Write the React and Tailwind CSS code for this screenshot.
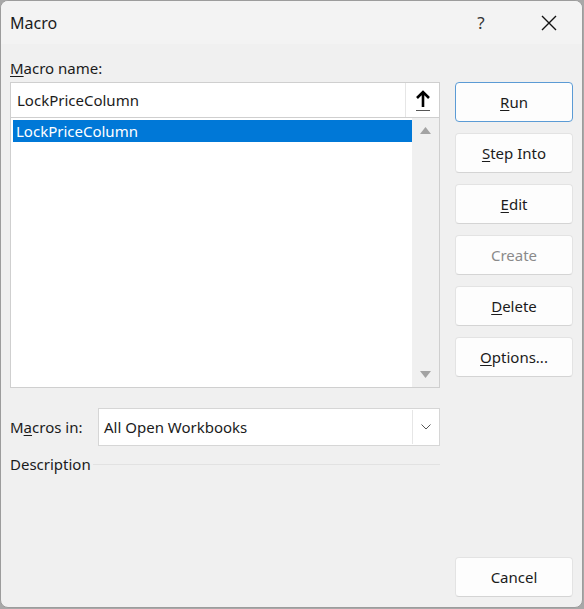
import React from 'react';

const font = { fontFamily: '"Noto Sans", "Open Sans", sans-serif' };

const Btn = ({ children, primary, disabled }) => (
    <button
        type="button"
        className={`h-[40px] w-[118px] rounded-[4px] bg-[#fdfdfd] text-[15px] ${primary ? 'border border-[#5b9bd5]' : 'border border-[#e3e3e3] border-b-[#d4d4d4]'} ${disabled ? 'text-[#8a8a8a]' : 'text-[#1b1b1b]'}`}
    >
        {children}
    </button>
);

const UpArrowIcon = () => (
    <svg width="18" height="24" viewBox="0 0 18 24" fill="none">
        <path d="M9 19V4M3 10l6-6 6 6" stroke="#000" strokeWidth="2.6" />
        <path d="M2 22.5h14" stroke="#555" strokeWidth="1" />
    </svg>
);

const App = () => {
    return (
        <div className="w-[584px] h-[609px] bg-[#a8a8a8]" style={font}>
            <div className="w-[583px] h-[608px] rounded-[8px] border border-[#9c9c9c] bg-[#f0f0f0] overflow-hidden flex flex-col text-[#1b1b1b]">
                {/* Title bar */}
                <div className="h-[43px] shrink-0 bg-[#f3f3f3] flex items-center pl-[9px]">
                    <span className="text-[16px] flex-1">Macro</span>
                    <span className="text-[17px] text-[#333] w-[70px] text-center ml-[4px]">?</span>
                    <div className="w-[66px] h-[43px] flex items-center justify-center">
                        <svg width="16" height="16" viewBox="0 0 16 16">
                            <path d="M1 1l14 14M15 1L1 15" stroke="#111" strokeWidth="1.4" />
                        </svg>
                    </div>
                </div>

                {/* Body */}
                <div className="flex-1 flex pl-[9px] gap-[15px]">
                    {/* Left column */}
                    <div className="w-[430px] flex flex-col">
                        <div className="h-[20px] mt-[14px] mb-[4px] text-[15px] leading-[20px]">
                            <u className="underline-offset-2">M</u>acro name:
                        </div>
                        <div className="border border-[#cfcfcf] bg-white">
                            <div className="h-[35px] flex border-b border-[#cfcfcf]">
                                <div className="flex-1 pl-[6px] flex items-center text-[15px]">LockPriceColumn</div>
                                <div className="w-[34px] flex items-center justify-center border-l border-[#e6e6e6]">
                                    <UpArrowIcon />
                                </div>
                            </div>
                            <div className="h-[269px] flex">
                                <div className="flex-1 pl-[2px] pt-[2px]">
                                    <div className="h-[22px] bg-[#0078d7] text-white text-[15px] leading-[22px] pl-[3px]">
                                        LockPriceColumn
                                    </div>
                                </div>
                                <div className="w-[27px] bg-[#f0f0f0] flex flex-col items-center justify-between py-[9px]">
                                    <svg width="11" height="7" viewBox="0 0 11 7"><path d="M5.5 0L11 7H0z" fill="#a3a3a3" /></svg>
                                    <svg width="11" height="7" viewBox="0 0 11 7"><path d="M0 0h11L5.5 7z" fill="#a3a3a3" /></svg>
                                </div>
                            </div>
                        </div>

                        <div className="flex items-center mt-[20px] h-[38px]">
                            <div className="w-[88px] text-[15px]">
                                M<u className="underline-offset-2">a</u>cros in:
                            </div>
                            <div className="flex-1 h-[38px] bg-white border border-[#d6d6d6] flex">
                                <div className="flex-1 flex items-center pl-[5px] text-[15px]">All Open Workbooks</div>
                                <div className="w-[26px] my-[1px] mr-[1px] border-l border-[#e6e6e6] flex items-center justify-center">
                                    <svg width="10" height="6" viewBox="0 0 10 6"><path d="M0.5 0.5L5 5l4.5-4.5" stroke="#555" fill="none" strokeWidth="1" /></svg>
                                </div>
                            </div>
                        </div>

                        <div className="flex items-center h-[20px] mt-[8px]">
                            <span className="text-[15px] leading-[20px]">Description</span>
                            <div className="flex-1 ml-[2px] border-t border-[#e2e2e2]" />
                        </div>
                    </div>

                    {/* Right column */}
                    <div className="flex flex-col pt-[38px] pb-[10px]">
                        <div className="flex flex-col gap-[11px]">
                            <Btn primary><u className="underline-offset-2">R</u>un</Btn>
                            <Btn><u className="underline-offset-2">S</u>tep Into</Btn>
                            <Btn><u className="underline-offset-2">E</u>dit</Btn>
                            <Btn disabled>Create</Btn>
                            <Btn><u className="underline-offset-2">D</u>elete</Btn>
                            <Btn><u className="underline-offset-2">O</u>ptions...</Btn>
                        </div>
                        <div className="flex-1" />
                        <Btn>Cancel</Btn>
                    </div>
                </div>
            </div>
        </div>
    );
};

export default App;
